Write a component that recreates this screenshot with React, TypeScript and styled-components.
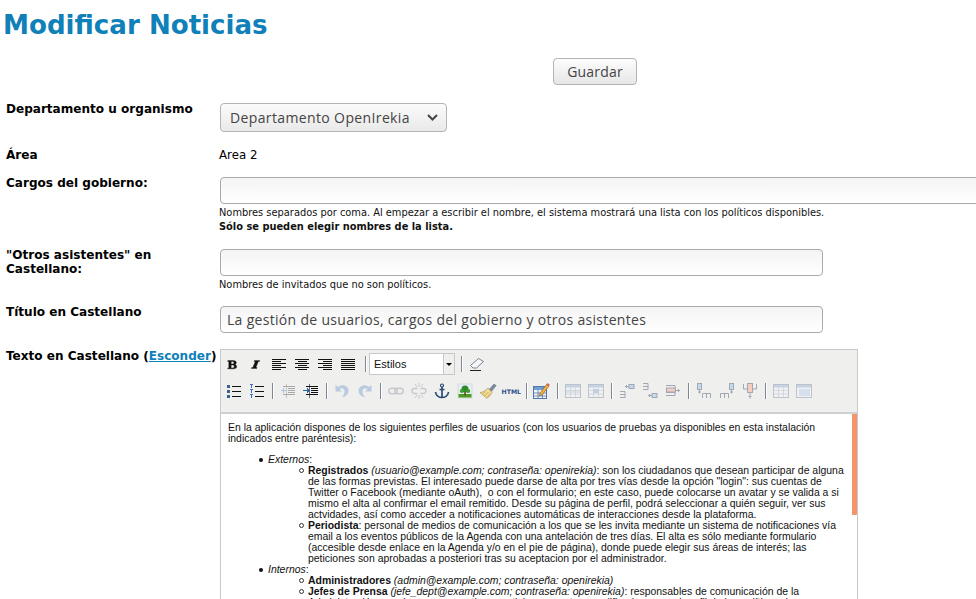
import styled, { createGlobalStyle } from "styled-components"
import { ReactNode } from "react"

const GlobalStyle = createGlobalStyle`
    html, body {
        margin: 0;
        padding: 0;
        height: 599px;
        overflow: hidden;
        background: #fff;
        font-family: "DejaVu Sans", sans-serif;
        color: #000;
    }
`

const Page = styled.div`
    width: 976px;
    height: 599px;
    overflow: hidden;
`

const Title = styled.h1`
    margin: 0;
    padding: 7px 0 0 3px;
    height: 50px;
    box-sizing: border-box;
    font-size: 26.1px;
    line-height: 36px;
    font-weight: 700;
    color: #0f80b8;
`

const SaveRow = styled.div`
    display: flex;
    height: 50px;
    padding: 8px 0 0 553px;
    box-sizing: border-box;
`

const SaveButton = styled.button`
    width: 84px;
    height: 27px;
    border: 1px solid #b4b4b4;
    border-radius: 4px;
    background: linear-gradient(#fdfdfd, #e6e6e6);
    font-family: "Open Sans", sans-serif;
    font-size: 14px;
    letter-spacing: 0.2px;
    color: #444;
    padding: 0;
`

const Row = styled.div<{ $height: number }>`
    display: grid;
    grid-template-columns: 213px 1fr;
    height: ${(p) => p.$height}px;
    padding-left: 6px;
`

const Label = styled.label`
    font-size: 12.05px;
    line-height: 14px;
    font-weight: 700;
    padding-top: 2px;
`

const LabelLink = styled.a`
    color: #0f80b8;
    text-decoration: underline;
`

const Plain = styled.div`
    font-size: 11.8px;
    line-height: 14px;
    padding-top: 2px;
`

const Help = styled.div`
    font-size: 9.85px;
    line-height: 14px;
    color: #111;
    padding-top: 2px;
    white-space: nowrap;
`

const Select = styled.div`
    display: flex;
    align-items: center;
    justify-content: space-between;
    width: 227px;
    height: 29px;
    margin: 3px 0 0 1px;
    padding: 0 8px 0 9px;
    box-sizing: border-box;
    border: 1px solid #b4b4b4;
    border-radius: 4px;
    background: linear-gradient(#fbfbfb, #e9e9e9);
    font-family: "Open Sans", sans-serif;
    font-size: 14px;
    letter-spacing: 0.37px;
    color: #444;
`

const TextBox = styled.input<{ $width: number }>`
    display: block;
    width: ${(p) => p.$width}px;
    height: 27px;
    margin: 3px 0 0 1px;
    padding: 0 6px;
    box-sizing: border-box;
    border: 1px solid #aaa;
    border-radius: 4px;
    background: linear-gradient(#f4f4f4, #fff);
    font-family: "Open Sans", sans-serif;
    font-size: 14px;
    letter-spacing: 0.31px;
    color: #444;
    outline: none;
`

const Editor = styled.div`
    width: 638px;
    margin: 2px 0 0 1px;
    border: 1px solid #c9c9c9;
    border-bottom: 0;
    box-sizing: border-box;
    height: 250px;
    overflow: hidden;
`

const Toolbar = styled.div`
    height: 60px;
    background: #efefee;
    border-bottom: 2px solid #d0d0d0;
    padding-top: 2px;
    box-sizing: content-box;
`

const ToolRow = styled.div<{ $inset?: number }>`
    display: flex;
    align-items: center;
    height: 24px;
    margin-bottom: 3px;
    padding-left: ${(p) => p.$inset ?? 0}px;
`

const Tool = styled.span<{ $off?: boolean }>`
    display: flex;
    align-items: center;
    justify-content: center;
    width: 23px;
    height: 22px;
    flex: none;
    opacity: ${(p) => (p.$off ? 0.35 : 1)};
`

const ToolSep = styled.span<{ $wide?: boolean }>`
    width: 1px;
    height: 16px;
    margin: 0 2px 0 ${(p) => (p.$wide ? 6 : 4)}px;
    flex: none;
    background: #7f8796;
    border-right: 1px solid #fff;
`

const StyleCombo = styled.div`
    display: flex;
    width: 86px;
    height: 22px;
    flex: none;
    border: 1px solid #c9c9c9;
    box-sizing: border-box;
    background: #fff;
    font-family: "Liberation Sans", sans-serif;
    font-size: 11px;
    line-height: 20px;
    color: #111;
`

const ComboText = styled.span`
    flex: 1;
    padding-left: 4px;
`

const ComboArrow = styled.span`
    width: 10px;
    background: #efefee;
    border-left: 1px solid #c9c9c9;
    display: flex;
    align-items: center;
    justify-content: center;
    &::after {
        content: "";
        border-top: 3px solid #000;
        border-left: 3px solid transparent;
        border-right: 3px solid transparent;
    }
`

const Body = styled.div`
    position: relative;
    height: 186px;
    overflow: hidden;
    padding: 8px 9px 0 7px;
    font-family: "Liberation Sans", sans-serif;
    font-size: 10.44px;
    line-height: 11px;
    color: #111;
`

const ScrollThumb = styled.div`
    position: absolute;
    top: 0;
    right: 0;
    width: 5px;
    height: 101px;
    background: #f4946a;
    border-radius: 0 0 1px 1px;
`

const Para = styled.p`
    margin: 0 0 10px;
    white-space: nowrap;
`

const Outer = styled.ul`
    margin: 0;
    padding: 0 0 0 40px;
    list-style: none;
    & > li {
        position: relative;
    }
    & > li::before {
        content: "";
        position: absolute;
        left: -9px;
        top: 4px;
        width: 4px;
        height: 4px;
        border-radius: 50%;
        background: #111;
    }
`

const Inner = styled.ul`
    margin: 0;
    padding: 0 0 0 40px;
    list-style: none;
    & > li {
        position: relative;
    }
    & > li::before {
        content: "";
        position: absolute;
        left: -9px;
        top: 3px;
        width: 3px;
        height: 3px;
        border-radius: 50%;
        border: 1px solid #333;
    }
`

const Line = styled.span`
    display: block;
    white-space: nowrap;
`

function Ico({ children, w = 16, h = 16 }: { children: ReactNode; w?: number; h?: number }) {
    return (
        <svg width={w} height={h} viewBox={`0 0 ${w} ${h}`} shapeRendering="crispEdges">
            {children}
        </svg>
    )
}

function AlignIcon({ mode }: { mode: "left" | "center" | "right" | "full" }) {
    const rows = [14, 9, 14, 9, 14, 9]
    return (
        <Ico>
            {rows.map((w, i) => {
                const width = mode === "full" ? 14 : w
                const x = mode === "left" || mode === "full" ? 1 : mode === "right" ? 15 - width : 8 - Math.floor(width / 2)
                return <rect key={i} x={x} y={3 + i * 2} width={width} height={1} fill="#111" />
            })}
        </Ico>
    )
}

function ListIcon({ numbered }: { numbered?: boolean }) {
    return (
        <Ico>
            {[3, 8, 13].map((y) => (
                <g key={y}>
                    {numbered ? (
                        <path d={`M1 ${y - 2}h3v1H3v3H2v-3H1z`} fill="#3f6fc0" />
                    ) : (
                        <rect x={1} y={y - 1} width={3} height={3} fill="#3f5f90" />
                    )}
                    <rect x={6} y={y} width={9} height={1} fill="#111" />
                </g>
            ))}
        </Ico>
    )
}

function IndentIcon({ outdent }: { outdent?: boolean }) {
    const c = outdent ? "#a8a8a8" : "#111"
    return (
        <Ico>
            <rect x={6} y={1} width={1} height={14} fill={c} opacity={0.6} />
            {[3, 5, 7, 9, 11].map((y) => (
                <rect key={y} x={y === 3 || y === 11 ? 3 : 8} y={y} width={y === 3 || y === 11 ? 12 : 7} height={1} fill={c} />
            ))}
            <path
                d={outdent ? "M1 7h5v1H1zM1 7h2V5h1v5H3V8H1z" : "M0 7h4V5h1v1h1v1h1v1H6v1H5v1H4V8H0z"}
                fill={outdent ? "#a9c3e6" : "#2a66b0"}
            />
        </Ico>
    )
}

function UndoIcon({ redo }: { redo?: boolean }) {
    return (
        <svg width="16" height="16" viewBox="0 0 16 16">
            <g transform={redo ? "translate(16 0) scale(-1 1)" : undefined}>
                <path d="M1.500 2v6.500H8L5.500 6c2-1.500 5-.5 5 2.500 0 2-1 4-2.500 6 4-1 6.500-3.500 6.500-6.500 0-5-6-7.500-10.500-4z" fill="#5b8bc5" />
            </g>
        </svg>
    )
}

function LinkIcon({ broken }: { broken?: boolean }) {
    return (
        <svg width="16" height="16" viewBox="0 0 16 16" fill="none" stroke="#7c8794" strokeWidth="1.500">
            {broken ? (
                <>
                    <path d="M6.500 5.500H3.500a2.300 2.300 0 0 0 0 5H6.500M9.500 5.500h3a2.300 2.300 0 0 1 0 5h-3" />
                    <path d="M8 0v4M8 12v4M4 1l2 3M12 1l-2 3M4 15l2-3M12 15l-2-3" strokeWidth="1" />
                </>
            ) : (
                <>
                    <rect x="0.750" y="5.250" width="8.500" height="5.500" rx="2.700" />
                    <rect x="6.750" y="5.250" width="8.500" height="5.500" rx="2.700" />
                </>
            )}
        </svg>
    )
}

function AnchorIcon() {
    return (
        <svg width="16" height="16" viewBox="0 0 16 16" fill="none" stroke="#2a4a75" strokeWidth="1.700">
            <circle cx="8" cy="2.500" r="1.500" strokeWidth="1.200" />
            <path d="M8 4v10.500M5.500 6.500h5M1.500 9c.5 3.500 3.500 5.500 6.500 5.500s6-2 6.500-5.500" />
        </svg>
    )
}

function ImageIcon() {
    return (
        <svg width="16" height="16" viewBox="0 0 16 16">
            <rect x="1" y="1" width="14" height="14" fill="#e8eef6" stroke="#c4ccd6" strokeWidth="0.600" />
            <rect x="1.500" y="11" width="13" height="3.500" fill="#4d9c22" />
            <rect x="7.300" y="8" width="1.600" height="4.500" fill="#6a4520" />
            <circle cx="8" cy="6" r="3.500" fill="#2f8a2a" />
            <circle cx="4.800" cy="8" r="2" fill="#3f9e30" />
            <circle cx="11.200" cy="8" r="2" fill="#3f9e30" />
        </svg>
    )
}

function BrushIcon() {
    return (
        <svg width="18" height="17" viewBox="0 0 18 17">
            <path d="M10 6.500L15 1l2.200 1.500L12.500 8.500z" fill="#7a8a9e" stroke="#55647a" strokeWidth="0.400" />
            <path d="M9 5L13 9.500 11.500 12 8 15.500 1 9.500C3.500 9.500 6 8 9 5z" fill="#f3dc9a" stroke="#a98a3c" strokeWidth="0.600" />
            <path d="M5.500 13l4-4M3.500 11l3-2.500M8 14.500l3-3.500" stroke="#b4933f" strokeWidth="0.700" />
        </svg>
    )
}

function TableEditIcon() {
    return (
        <svg width="17" height="16" viewBox="0 0 17 16">
            <rect x="0.500" y="3.500" width="13" height="12" fill="#f4f7fb" stroke="#4f77a8" />
            <rect x="1" y="4" width="12" height="3" fill="#6f9fd2" />
            <path d="M1 10h12M1 13h12M5 7v8M9.500 7v8" stroke="#4f77a8" strokeWidth="0.800" />
            <path d="M7 10l6.500-8.500 2.300 1.700-6.500 8.500-3 1z" fill="#f0b23e" stroke="#7a5020" strokeWidth="0.600" />
            <path d="M13.500 1.500L14.500 0l2.300 1.700-1 1.500z" fill="#d8604a" />
        </svg>
    )
}

function CellTableIcon({ variant }: { variant: "row" | "cell" | "plain" | "props" }) {
    return (
        <svg width="16" height="14" viewBox="0 0 16 14" opacity="0.5">
            <rect x="0.500" y="0.500" width="15" height="13" fill="#f0f3f7" stroke="#8d98a8" />
            <rect x="1" y="1" width="14" height="2.500" fill="#9db7d8" />
            {variant === "row" && <rect x="1" y="6" width="14" height="3" fill="#c9d8ee" />}
            {variant === "cell" && <rect x="5" y="5" width="6" height="4" fill="#8fb0de" />}
            {variant === "props" && <rect x="3" y="5" width="11" height="7" fill="#bcd0ee" />}
            {variant !== "props" && <path d="M1 6.500h14M1 10h14M5.500 3.500V13M10.500 3.500V13" stroke="#a7b0bd" strokeWidth="0.700" />}
        </svg>
    )
}

function RowColIcon({ variant }: { variant: number }) {
    const shapes = [
        <g key="0"><path d="M1 8.500h5v6H1M1 11.500h5" /><rect x="10" y="1.500" width="5" height="4" fill="#c5d8ef" /><path d="M10 3.500H6M7.500 2v3" /></g>,
        <g key="1"><path d="M1 .5h5v6H1M1 3.500h5" /><rect x="10" y="10.500" width="5" height="4" fill="#c5d8ef" /><path d="M10 12.500H6M7.500 11v3" /></g>,
        <g key="2"><path d="M1 2.500h9v10H1M1 6h9M1 9.500h9" /><rect x="1.500" y="5" width="9" height="4" fill="#f4cdbf" /><path d="M10 7.500h5M13.500 6v3" /></g>,
        <g key="3"><rect x="1.500" y="0.500" width="4" height="6" fill="#c5d8ef" /><path d="M3.500 6.500v4M2 9h3M6.500 15V10.500h8V15M10.500 10.500V15" /></g>,
        <g key="4"><rect x="10.500" y="0.500" width="4" height="6" fill="#c5d8ef" /><path d="M12.500 6.500v4M11 9h3M1.500 15V10.500h8V15M5.500 10.500V15" /></g>,
        <g key="5"><path d="M1.500 1v5h13V1" /><rect x="5.500" y="0.500" width="5" height="9" fill="#f4cdbf" /><path d="M8 9.500v6M6.500 13.500h3" /></g>,
    ]
    return (
        <svg width="16" height="16" viewBox="0 0 16 16" fill="none" stroke="#a0a8b3" strokeWidth="1">
            {shapes[variant]}
        </svg>
    )
}

export default function App() {
    return (
        <Page>
            <GlobalStyle />
            <Title>Modificar Noticias</Title>
            <SaveRow>
                <SaveButton type="button">Guardar</SaveButton>
            </SaveRow>
            <Row $height={46}>
                <Label>Departamento u organismo</Label>
                <Select>
                    Departamento OpenIrekia
                    <svg width="11" height="7" viewBox="0 0 11 7" fill="none" stroke="#444" strokeWidth="2">
                        <path d="M1 1l4.500 4.500L10 1" />
                    </svg>
                </Select>
            </Row>
            <Row $height={28}>
                <Label>Área</Label>
                <Plain>Area 2</Plain>
            </Row>
            <Row $height={72}>
                <Label>Cargos del gobierno:</Label>
                <div>
                    <TextBox $width={800} />
                    <Help>
                        Nombres separados por coma. Al empezar a escribir el nombre, el sistema mostrará una lista con los políticos disponibles.
                        <br />
                        <b>Sólo se pueden elegir nombres de la lista.</b>
                    </Help>
                </div>
            </Row>
            <Row $height={57}>
                <Label>"Otros asistentes" en Castellano:</Label>
                <div>
                    <TextBox $width={603} />
                    <Help>Nombres de invitados que no son políticos.</Help>
                </div>
            </Row>
            <Row $height={44}>
                <Label>Título en Castellano</Label>
                <TextBox $width={603} defaultValue="La gestión de usuarios, cargos del gobierno y otros asistentes" />
            </Row>
            <Row $height={252}>
                <Label>Texto en Castellano (<LabelLink>Esconder</LabelLink>)</Label>
                <Editor>
                    <Toolbar>
                        <ToolRow>
                            <Tool><svg width="11" height="11" viewBox="0 0 14 14"><path d="M1 2h7c2.500 0 3.800 1 3.800 2.700 0 1.200-.8 2-2 2.300 1.500.3 2.500 1.200 2.500 2.600 0 1.800-1.500 2.900-4 2.900H1v-1.200h1.300V3.200H1zm4.300 1.200V6.300h1.800c1.100 0 1.700-.5 1.700-1.600S8.200 3.200 7.100 3.200zm0 4.300v3.800h2c1.200 0 1.900-.7 1.900-1.900s-.7-1.900-1.900-1.900z" fill="#111" stroke="#111" strokeWidth="0.500" /></svg></Tool>
                            <Tool><svg width="11" height="11" viewBox="0 0 14 14"><path d="M5.500 2h7l-.4 1.200h-1.500L7.500 10.800h1.600L8.700 12h-7l.4-1.200h1.500L6.700 3.200H5.100z" fill="#111" stroke="#111" strokeWidth="0.400" /></svg></Tool>
                            <Tool><AlignIcon mode="left" /></Tool>
                            <Tool><AlignIcon mode="center" /></Tool>
                            <Tool><AlignIcon mode="right" /></Tool>
                            <Tool><AlignIcon mode="full" /></Tool>
                            <ToolSep $wide />
                            <StyleCombo><ComboText>Estilos</ComboText><ComboArrow /></StyleCombo>
                            <ToolSep $wide />
                            <Tool>
                                <svg width="16" height="16" viewBox="0 0 16 16">
                                    <path d="M1.500 9.500L9.500 2.500l5 3-7 6.500H4z" fill="#f4f6fa" stroke="#6d7480" strokeWidth="0.900" />
                                    <path d="M1 14.500h11" stroke="#222" strokeWidth="1" />
                                </svg>
                            </Tool>
                        </ToolRow>
                        <ToolRow $inset={1}>
                            <Tool><ListIcon /></Tool>
                            <Tool><ListIcon numbered /></Tool>
                            <ToolSep />
                            <Tool><IndentIcon outdent /></Tool>
                            <Tool><IndentIcon /></Tool>
                            <ToolSep />
                            <Tool $off><UndoIcon /></Tool>
                            <Tool $off><UndoIcon redo /></Tool>
                            <ToolSep />
                            <Tool $off><LinkIcon /></Tool>
                            <Tool $off><LinkIcon broken /></Tool>
                            <Tool><AnchorIcon /></Tool>
                            <Tool><ImageIcon /></Tool>
                            <Tool><BrushIcon /></Tool>
                            <Tool>
                                <svg width="20" height="10" viewBox="0 0 20 10">
                                    <text x="0.500" y="8" fontFamily="DejaVu Sans" fontWeight="700" fontSize="6.200" fill="#2d4f8f">HTML</text>
                                </svg>
                            </Tool>
                            <ToolSep />
                            <Tool><TableEditIcon /></Tool>
                            <ToolSep />
                            <Tool><CellTableIcon variant="row" /></Tool>
                            <Tool><CellTableIcon variant="cell" /></Tool>
                            <ToolSep />
                            <Tool><RowColIcon variant={0} /></Tool>
                            <Tool><RowColIcon variant={1} /></Tool>
                            <Tool><RowColIcon variant={2} /></Tool>
                            <ToolSep />
                            <Tool><RowColIcon variant={3} /></Tool>
                            <Tool><RowColIcon variant={4} /></Tool>
                            <Tool><RowColIcon variant={5} /></Tool>
                            <ToolSep />
                            <Tool><CellTableIcon variant="plain" /></Tool>
                            <Tool><CellTableIcon variant="props" /></Tool>
                        </ToolRow>
                    </Toolbar>
                    <Body>
                        <ScrollThumb />
                        <Para>
                            En la aplicación dispones de los siguientes perfiles de usuarios (con los usuarios de pruebas ya disponibles en esta instalación
                            <br />
                            indicados entre paréntesis):
                        </Para>
                        <Outer>
                            <li>
                                <em>Externos</em>:
                                <Inner>
                                    <li>
                                        <Line><b>Registrados</b> <em>(usuario@example.com; contraseña: openirekia)</em>: son los ciudadanos que desean participar de alguna</Line>
                                        <Line>de las formas previstas. El interesado puede darse de alta por tres vías desde la opción "login": sus cuentas de</Line>
                                        <Line>Twitter o Facebook (mediante oAuth),&nbsp; o con el formulario; en este caso, puede colocarse un avatar y se valida a si</Line>
                                        <Line>mismo el alta al confirmar el email remitido. Desde su página de perfil, podrá seleccionar a quién seguir, ver sus</Line>
                                        <Line>actvidades, así como acceder a notificaciones automáticas de interacciones desde la plataforma.</Line>
                                    </li>
                                    <li>
                                        <Line><b>Periodista</b>: personal de medios de comunicación a los que se les invita mediante un sistema de notificaciones vía</Line>
                                        <Line>email a los eventos públicos de la Agenda con una antelación de tres días. El alta es sólo mediante formulario</Line>
                                        <Line>(accesible desde enlace en la Agenda y/o en el pie de página), donde puede elegir sus áreas de interés; las</Line>
                                        <Line>peticiones son aprobadas a posteriori tras su aceptacion por el administrador.</Line>
                                    </li>
                                </Inner>
                            </li>
                            <li>
                                <em>Internos</em>:
                                <Inner>
                                    <li><Line><b>Administradores</b> <em>(admin@example.com; contraseña: openirekia)</em></Line></li>
                                    <li>
                                        <Line><b>Jefes de Prensa</b> <em>(jefe_dept@example.com; contraseña: openirekia)</em>: responsables de comunicación de la</Line>
                                        <Line>Administración, pueden crear y gestionar noticias y eventos, modificarlos y ver el perfil de los políticos de</Line>
                                    </li>
                                </Inner>
                            </li>
                        </Outer>
                    </Body>
                </Editor>
            </Row>
        </Page>
    )
}
